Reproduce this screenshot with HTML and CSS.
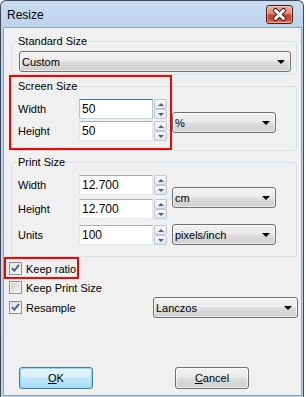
FILE: index.html
```html
<!DOCTYPE html>
<html lang="en">
<head>
  <meta charset="UTF-8">
  <meta name="viewport" content="width=device-width, initial-scale=1.0">
  <title>Resize</title>
  <link rel="stylesheet" href="styles.css">
</head>
<body>
  <div class="window">
    <div class="titlebar">
      <span class="title">Resize</span>
      <div class="close">
        <svg width="25" height="17" viewBox="0 0 25 17">
          <path d="M8.5 4.5l8 8M16.5 4.5l-8 8" stroke="#4a1c14" stroke-width="5" stroke-linecap="round" fill="none"/>
          <path d="M8.5 4.5l8 8M16.5 4.5l-8 8" stroke="#fff" stroke-width="3" stroke-linecap="round" fill="none"/>
        </svg>
      </div>
    </div>

    <div class="client">
      <fieldset class="group group-std">
        <legend>Standard Size</legend>
        <div class="combo combo-std"><span>Custom</span><i class="arrow"></i></div>
      </fieldset>

      <div class="marked">
        <fieldset class="group group-screen">
          <legend>Screen Size</legend>
          <div class="grid grid-screen">
            <label>Width</label>
            <div class="edit hot">50</div>
            <div class="spin"><span class="up"></span><span class="down"></span></div>
            <div class="combo combo-unit combo-pct"><span>%</span><i class="arrow"></i></div>

            <label>Height</label>
            <div class="edit">50</div>
            <div class="spin"><span class="up"></span><span class="down"></span></div>
          </div>
        </fieldset>
        <span class="mark mark-screen"></span>
      </div>

      <fieldset class="group group-print">
        <legend>Print Size</legend>
        <div class="grid grid-print">
          <label>Width</label>
          <div class="edit">12.700</div>
          <div class="spin"><span class="up"></span><span class="down"></span></div>
          <div class="combo combo-unit combo-cm"><span>cm</span><i class="arrow"></i></div>

          <label>Height</label>
          <div class="edit">12.700</div>
          <div class="spin"><span class="up"></span><span class="down"></span></div>

          <label class="last">Units</label>
          <div class="edit last">100</div>
          <div class="spin last"><span class="up"></span><span class="down"></span></div>
          <div class="combo combo-unit last"><span>pixels/inch</span><i class="arrow"></i></div>
        </div>
      </fieldset>

      <div class="checks">
        <div class="check-row">
          <span class="box"><svg width="11" height="11" viewBox="0 0 11 11"><path d="M2 5.2l2.3 2.6 4.7-6" stroke="#4a5f97" stroke-width="2" fill="none"/></svg></span>
          <span>Keep ratio</span>
          <span class="mark mark-ratio"></span>
        </div>
        <div class="check-row">
          <span class="box empty"></span>
          <span>Keep Print Size</span>
        </div>
        <div class="check-row resample">
          <span class="box"><svg width="11" height="11" viewBox="0 0 11 11"><path d="M2 5.2l2.3 2.6 4.7-6" stroke="#4a5f97" stroke-width="2" fill="none"/></svg></span>
          <span>Resample</span>
          <div class="combo combo-filter"><span>Lanczos</span><i class="arrow"></i></div>
        </div>
      </div>

      <div class="buttons">
        <div class="btn btn-ok"><u>O</u>K</div>
        <div class="btn btn-cancel"><u>C</u>ancel</div>
      </div>
    </div>
  </div>
</body>
</html>
```

FILE: styles.css
```css
body {
  margin: 0;
  background: #fff;
  font-family: "Liberation Sans", Arial, sans-serif;
  font-size: 11px;
  color: #000;
}
.window {
  width: 304px; height: 397px; box-sizing: border-box;
  border: 1px solid #3e4a5a; border-bottom: none;
  border-radius: 6px 6px 0 0;
  background: linear-gradient(#c9dcf0, #bad1ea 8%, #c2d6ec 60%, #b8cfe8);
  display: flex; flex-direction: column;
}
.titlebar {
  height: 26px; flex: none;
  display: flex; align-items: flex-start; justify-content: space-between;
}
.title { font-size: 12px; line-height: 16px; margin: 6px 0 0 6px; }
.close {
  width: 27px; height: 19px; box-sizing: border-box;
  margin: 4px 10px 0 0;
  border: 1px solid #4f1a12; border-radius: 3px;
  background: linear-gradient(#e8ada1, #d98a7b 45%, #c5472e 52%, #c44a2e 78%, #dd8a68);
  box-shadow: inset 0 0 0 1px rgba(255, 255, 255, 0.35);
  display: flex; align-items: center; justify-content: center;
}
.client {
  flex: 1; margin: 0 1px 1px 2px;
  border: 1px solid #8fa3bb;
  background: #f0f0f0;
  display: flex; flex-direction: column;
}

/* group boxes */
.group {
  margin: 0 4px 0 7px; padding: 0 6px;
  border: 1px solid #d5dfe5; border-radius: 3px;
  min-inline-size: 0;
}
.group legend { padding: 0 1px; margin-left: -1px; line-height: 14px; }
.group-std { margin-top: 6px; padding-bottom: 2px; }
.group-print { margin-top: 4px; padding-bottom: 11px; }
.marked { position: relative; margin-top: 4px; }
.group-screen { padding-bottom: 9px; }

.mark { position: absolute; border: 2px solid #f00; box-sizing: border-box; }
.mark-screen { left: 5px; top: -4px; width: 163px; height: 75px; }
.mark-ratio { left: 0; top: -2px; width: 75px; height: 22px; }

/* combo boxes */
.combo {
  height: 21px; box-sizing: border-box;
  border: 1px solid #707070; border-radius: 3px;
  background: linear-gradient(#f2f2f2, #ebebeb 48%, #dddddd 52%, #cfcfcf);
  box-shadow: inset 0 0 0 1px rgba(255, 255, 255, 0.6);
  display: flex; align-items: center; justify-content: space-between;
  padding: 0 5px 0 2px;
}
.arrow {
  width: 0; height: 0;
  border-left: 4px solid transparent; border-right: 4px solid transparent;
  border-top: 4px solid #000;
}
.combo-std { width: 272px; margin: 3px 0 0 1px; }
.combo-unit { width: 104px; justify-self: end; }
.combo-pct { grid-row: 1 / span 2; grid-column: 4; align-self: start; margin-top: 13px; }
.combo-cm { grid-row: 1 / span 2; grid-column: 4; align-self: start; margin-top: 12px; }
.combo-filter { width: 145px; margin-left: auto; margin-right: 3px; }

/* edit rows */
.grid {
  display: grid; margin-top: 6px;
  grid-template-columns: 61px 74px 14px 109px;
  align-items: center;
}
.grid-screen { grid-template-rows: 20px 20px; row-gap: 2px; }
.grid-print { grid-template-rows: 20px 20px 22px; row-gap: 4px; }
.grid-print .last { align-self: end; }
.grid label { line-height: 20px; }
.edit {
  height: 20px; box-sizing: border-box;
  border: 1px solid #e2e3ea; border-top-color: #abadb3; border-bottom-color: #e3e9ef;
  background: #fff; padding-left: 2px;
  font-size: 12px; line-height: 18px;
}
.edit.hot { border-color: #b7d9ed; border-top-color: #3d7bad; border-left-color: #a4c9e3; border-right-color: #a4c9e3; }
.spin {
  width: 13px; height: 20px; justify-self: end;
  display: flex; flex-direction: column;
}
.spin span {
  flex: 1; box-sizing: border-box;
  border: 1px solid #bfc6d2; border-radius: 2px;
  background: linear-gradient(#f7f8fa, #e3e6ea);
  display: flex; align-items: center; justify-content: center;
}
.spin span::after {
  content: ""; width: 0; height: 0;
  border-left: 3px solid transparent; border-right: 3px solid transparent;
}
.spin .up::after { border-bottom: 3px solid #4d6185; }
.spin .down::after { border-top: 3px solid #4d6185; }

/* check boxes */
.checks { margin-top: 2px; display: flex; flex-direction: column; }
.check-row {
  position: relative; height: 19px;
  display: flex; align-items: center; gap: 4px;
  padding-left: 5px;
}
.check-row.resample { height: 21px; }
.box {
  width: 13px; height: 13px; box-sizing: border-box;
  border: 1px solid #8e8f8f;
  background: linear-gradient(135deg, #e0e0e0, #fbfbfb);
  display: flex; align-items: center; justify-content: center;
}
.box.empty { background: linear-gradient(135deg, #cbcbcb, #f6f6f6); box-shadow: inset 0 0 0 1px #f4f4f4; }

/* dialog buttons */
.buttons {
  margin-top: auto; padding: 0 0 6px 15px;
  display: flex; gap: 82px;
}
.btn {
  width: 74px; height: 22px; box-sizing: border-box;
  border-radius: 3px; text-align: center; line-height: 20px;
}
.btn-ok {
  border: 1px solid #3c7fb1;
  background: linear-gradient(#e6f6fe, #d4eefb 48%, #bfe6fa 52%, #a9dbf5);
  box-shadow: inset 0 0 0 1px #8ed6f7;
}
.btn-cancel {
  border: 1px solid #707070;
  background: linear-gradient(#f2f2f2, #ebebeb 48%, #dddddd 52%, #cfcfcf);
  box-shadow: inset 0 0 0 1px rgba(255, 255, 255, 0.7);
}
```
